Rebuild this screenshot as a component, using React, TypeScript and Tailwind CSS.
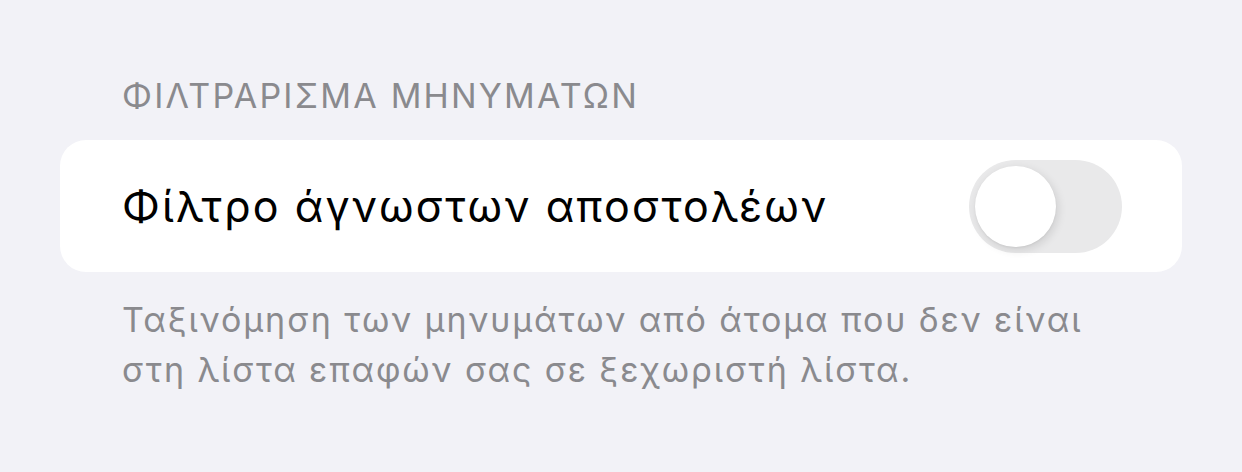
import React from "react";

function Toggle() {
  return (
    <div className="relative h-[93px] w-[153px] shrink-0 rounded-full bg-[#e9e9ea]">
      <div className="absolute left-[6px] top-[6px] h-[81px] w-[81px] rounded-full bg-white shadow-[2px_3px_10px_rgba(0,0,0,0.12),0_1px_2px_rgba(0,0,0,0.05)]" />
    </div>
  );
}

export default function App() {
  return (
    <div
      className="h-[472px] w-[1242px] bg-[#f2f2f7] px-[60px] pt-[75px]"
      style={{ fontFamily: "Inter, 'Noto Sans', sans-serif" }}
    >
      <div className="px-[62px] text-[34px] leading-[42px] tracking-[2.2px] text-[#8a8a8e]">
        ΦΙΛΤΡΑΡΙΣΜΑ ΜΗΝΥΜΑΤΩΝ
      </div>
      <div className="mt-[23px] flex h-[132px] items-center justify-between rounded-[26px] bg-white pl-[62px] pr-[60px]">
        <span className="text-[43px] tracking-[2.1px] text-black">Φίλτρο άγνωστων αποστολέων</span>
        <Toggle />
      </div>
      <div className="px-[62px] pt-[23px] text-[34px] leading-[50px] tracking-[1.9px] text-[#8a8a8e]">
        Ταξινόμηση των μηνυμάτων από άτομα που δεν είναι
        <br />
        στη λίστα επαφών σας σε ξεχωριστή λίστα.
      </div>
    </div>
  );
}
